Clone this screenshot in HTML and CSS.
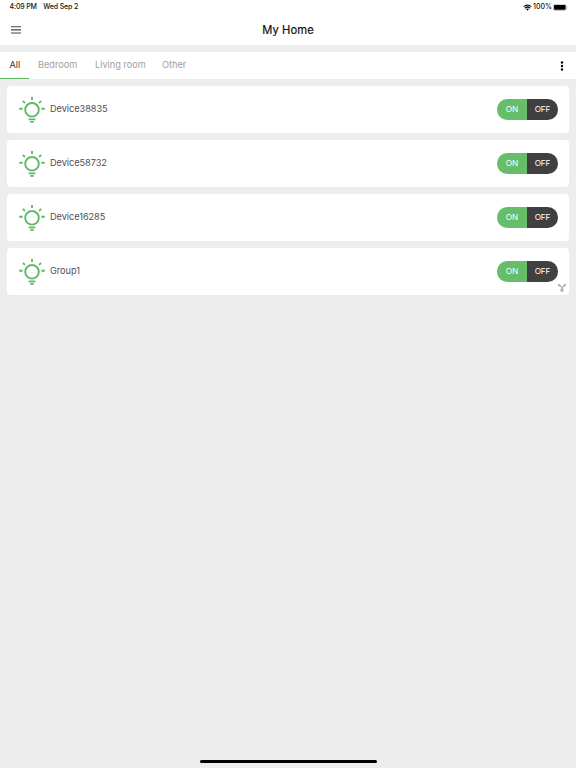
FILE: index.html
```html
<!DOCTYPE html>
<html lang="en">
<head>
<meta charset="utf-8">
<title>My Home</title>
<link rel="stylesheet" href="styles.css">
</head>
<body>
<svg width="0" height="0" class="defs">
  <symbol id="bulb" viewBox="0 0 26 27">
    <g fill="none" stroke="#60b966" stroke-width="1.9">
      <circle cx="13" cy="13.8" r="6.8"/>
      <path d="M13 1v3M3.8 5l2.2 1.9M22.2 5l-2.2 1.9M.2 12.8h3.5M22.3 12.8h3.5M9.6 23.4h6.8M11.2 25.9h3.6"/>
    </g>
  </symbol>
</svg>
<div class="status">
  <div class="clock"><span class="time">4:09 PM</span><span class="date">Wed Sep 2</span></div>
  <div class="power">
    <svg class="wifi" viewBox="0 0 9 7"><path d="M.7 2.6a5.5 5.5 0 0 1 7.6 0M2 4.2a3.6 3.6 0 0 1 5 0" fill="none" stroke="#111" stroke-width="1.2"/><path d="M3.1 5.3a2 2 0 0 1 2.8 0L4.5 6.8z" fill="#111"/></svg>
    <span class="percent">100%</span>
    <svg class="battery" viewBox="0 0 15 7"><rect x=".3" y=".3" width="13" height="6.2" rx="1.7" fill="#fff" stroke="#888" stroke-width=".5"/><rect x="1" y="1" width="11.6" height="4.8" rx="1"/><path d="M13.9 2.4q.9 1 0 2z" fill="#888"/></svg>
  </div>
</div>
<header class="header">
  <svg class="menu" viewBox="0 0 10 8"><path d="M0 .8h10M0 3.9h10M0 7h10" stroke="#444" stroke-width="1.1"/></svg>
  <h1 class="title">My Home</h1>
</header>
<nav class="tabs">
  <span class="tab active">All</span>
  <span class="tab bedroom">Bedroom</span>
  <span class="tab living">Living room</span>
  <span class="tab other">Other</span>
  <svg class="more" viewBox="0 0 4 10"><circle cx="2" cy="1.5" r="1.2"/><circle cx="2" cy="5" r="1.2"/><circle cx="2" cy="8.5" r="1.2"/></svg>
</nav>
<main class="list">
  <div class="card">
    <svg class="bulb"><use href="#bulb"/></svg>
    <span class="name">Device38835</span>
    <div class="switch"><span class="on">ON</span><span class="off">OFF</span></div>
  </div>
  <div class="card">
    <svg class="bulb"><use href="#bulb"/></svg>
    <span class="name">Device58732</span>
    <div class="switch"><span class="on">ON</span><span class="off">OFF</span></div>
  </div>
  <div class="card">
    <svg class="bulb"><use href="#bulb"/></svg>
    <span class="name">Device16285</span>
    <div class="switch"><span class="on">ON</span><span class="off">OFF</span></div>
  </div>
  <div class="card">
    <svg class="bulb"><use href="#bulb"/></svg>
    <span class="name">Group1</span>
    <div class="switch"><span class="on">ON</span><span class="off">OFF</span></div>
    <svg class="badge" viewBox="0 0 8 8"><g fill="none" stroke="#829c8a" stroke-width="1"><circle cx="1.2" cy="1.3" r=".8"/><circle cx="6.8" cy="1.3" r=".8"/><circle cx="4" cy="6.2" r="1.2"/><path d="M2 1.9l2 1.5 2-1.5M4 3.4v1.7"/></g></svg>
  </div>
</main>
<footer class="home"><div class="bar"></div></footer>
</body>
</html>
```
FILE: styles.css
```css
* { box-sizing: border-box; }
body {
  margin: 0;
  height: 768px;
  overflow: hidden;
  display: flex;
  flex-direction: column;
  background: #ededed;
  color: #111;
  font-family: Inter, "Liberation Sans", sans-serif;
}
svg { display: block; flex: none; }
span { white-space: nowrap; }
.defs { position: absolute; }
.status {
  height: 14px;
  flex: none;
  display: flex;
  justify-content: space-between;
  padding: 0 8px 0 9.5px;
  background: #fff;
  font-size: 7px;
  line-height: 14px;
  font-weight: 500;
  letter-spacing: -.15px;
}
.clock { display: flex; gap: 6.5px; }
.power { display: flex; align-items: center; letter-spacing: 0; }
.wifi { width: 9px; height: 7px; margin-right: 1.5px; }
.percent { margin-right: 1px; }
.battery { width: 15px; height: 7px; }
.header {
  height: 31px;
  flex: none;
  display: grid;
  grid-template-columns: 40px 1fr 40px;
  align-items: center;
  background: #fff;
}
.menu { width: 10px; height: 8px; margin-left: 11px; }
.title {
  margin: 1px 0 0;
  text-align: center;
  font-size: 11.2px;
  line-height: 30px;
  font-weight: 400;
  letter-spacing: .1px;
  -webkit-text-stroke: .2px #111;
}
.tabs {
  height: 27px;
  flex: none;
  margin-top: 7px;
  display: flex;
  align-items: center;
  padding-right: 12px;
  background: #fff;
  color: #a0a0a0;
  font-size: 9.2px;
  line-height: 26px;
}
.tab { height: 27px; }
.active { width: 29px; padding-left: 9.5px; border-bottom: 1px solid #5dbb63; color: #333; }
.bedroom { width: 57px; margin-left: 9px; }
.living { width: 67px; }
.more { width: 4px; height: 10px; margin-left: auto; }
.list { display: flex; flex-direction: column; gap: 7px; padding: 7px; }
.card {
  position: relative;
  height: 47px;
  display: flex;
  align-items: center;
  padding: 0 11px 0 12px;
  border-radius: 4px;
  background: #fff;
}
.bulb { width: 26px; height: 27px; }
.name { margin: 0 0 1px 5px; color: #505050; font-size: 9.2px; line-height: 12px; letter-spacing: -.05px; }
.switch {
  width: 61px;
  height: 20.5px;
  margin: 0 0 .5px auto;
  display: flex;
  overflow: hidden;
  border-radius: 10.25px;
  color: #fff;
  font-size: 8.2px;
  line-height: 20px;
  text-align: center;
}
.on { width: 30px; background: #66bd6a; }
.off { width: 31px; background: #404040; letter-spacing: -.1px; }
.badge { position: absolute; right: 3.5px; bottom: 3px; width: 8px; height: 8px; }
.home { margin-top: auto; height: 8px; display: flex; justify-content: center; }
.bar { width: 177px; height: 3px; border-radius: 2px; background: #000; }
```
